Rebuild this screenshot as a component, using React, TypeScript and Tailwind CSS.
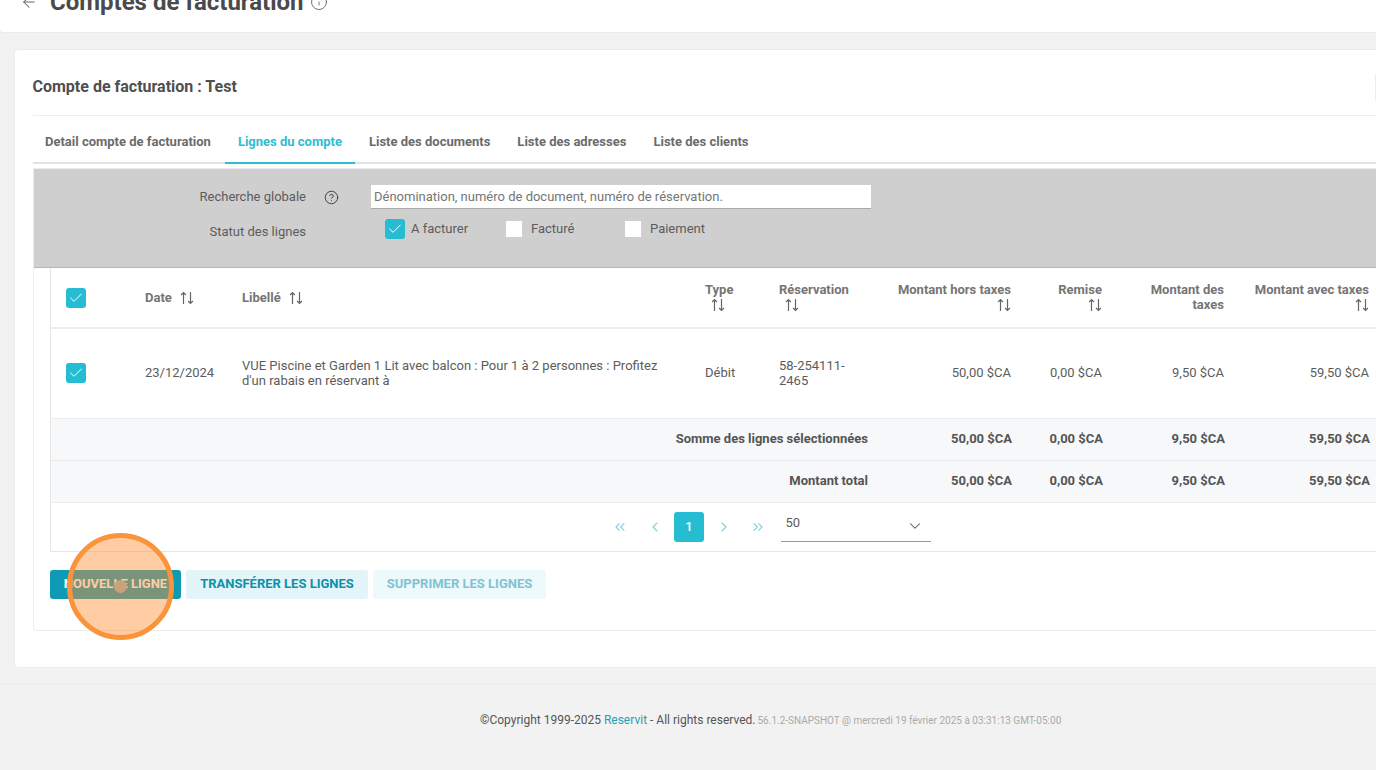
import React from 'react';
import { ArrowLeft, Check, ChevronDown, ChevronLeft, ChevronRight, ChevronsLeft, ChevronsRight, CircleHelp, Info } from 'lucide-react';

const tableCols = 'grid grid-cols-[94px_97px_463px_74px_100px_132px_91px_122px_145px_40px]';
const totalCols = 'grid grid-cols-[828px_133px_91px_122px_145px_40px]';

const SortIcon = ({ className = '' }: { className?: string }) => (
  <svg viewBox="0 0 14 14" className={`w-[14px] h-[14px] ${className}`} fill="none" stroke="#666" strokeWidth="1.2">
    <path d="M3.5 13V1.5M1.1 4L3.5 1.5L5.9 4" />
    <path d="M10.5 1v11.5M8.1 10L10.5 12.5L12.9 10" />
  </svg>
);

const TealCheck = () => (
  <span className="w-[20px] h-[20px] rounded-[3px] bg-[#26bcd2] flex items-center justify-center">
    <Check size={16} color="#fff" strokeWidth={1.5} />
  </span>
);

const Tab = ({ label, active }: { label: string; active?: boolean }) => (
  <div
    className={`px-[13px] h-[48px] pt-[6px] flex items-center text-[13px] font-bold border-b-2 ${
      active ? 'text-[#2ebdd1] border-[#2ebdd1]' : 'text-[#6b6b6b] border-transparent'
    }`}
  >
    {label}
  </div>
);

const TotalRow = ({ label, className }: { label: string; className: string }) => (
  <div className={`${totalCols} items-center bg-[#f6f8fa] pb-[2px] text-[13px] font-bold text-[#555] text-right ${className}`}>
    <div className="pr-[11px]">{label}</div>
    <div>50,00 $CA</div>
    <div>0,00 $CA</div>
    <div>9,50 $CA</div>
    <div>59,50 $CA</div>
  </div>
);

export default function App() {
  return (
    <div className="relative w-[1376px] h-[770px] overflow-hidden bg-[#f2f2f2] font-['Roboto',sans-serif]">
      {/* page is scrolled, so title is cut off at the top */}
      <div className="h-[32px] bg-white rounded-bl-[4px] overflow-hidden shadow-[0_1px_0_#ececec]">
        <div className="flex items-center h-[28px] -mt-[12px] pl-[20px]">
          <ArrowLeft size={18} color="#666" strokeWidth={1.4} />
          <h1 className="ml-[12px] text-[24px] font-bold text-[#4a4a4a] whitespace-nowrap">Comptes de facturation</h1>
          <Info size={18} color="#666" strokeWidth={1.2} className="ml-[6px]" />
        </div>
      </div>

      <div className="ml-[14px] mt-[17px] h-[619px] bg-white rounded-l-[4px] border border-r-0 border-[#ececec] pl-[18px]">
        <div className="flex items-center justify-between h-[66px] pt-[9px] border-b border-[#ececec]">
          <h2 className="-ml-[0.5px] text-[16px] font-bold text-[#4f4f4f]">Compte de facturation : Test</h2>
          <div className="w-px h-[26px] bg-[#dff2f5]" />
        </div>

        <div className="border-b-2 border-[#e2e2e2] h-[48px]">
          <div className="flex gap-px -ml-px">
            <Tab label="Detail compte de facturation" />
            <Tab label="Lignes du compte" active />
            <Tab label="Liste des documents" />
            <Tab label="Liste des adresses" />
            <Tab label="Liste des clients" />
          </div>
        </div>

        <div className="mt-[4px] h-[463px] border border-r-0 border-[#ececec] rounded-bl-[4px]">
          {/* filters */}
          <div className="h-[99px] bg-[#cfcfcf] pt-[16px] border-b border-[#b5b5b5] text-[13px] text-[#5c5c5c]">
            <div className="flex items-center h-[24px]">
              <div className="w-[272px] text-right">Recherche globale</div>
              <CircleHelp size={15} color="#444" strokeWidth={1.6} className="ml-[18px]" />
              <div className="ml-[32px] w-[500px] h-[24px] bg-white border-b border-[#aaa] flex items-center pl-[3px] text-[13px] text-[#757575]">
                Dénomination, numéro de document, numéro de réservation.
              </div>
            </div>
            <div className="flex mt-[10px]">
              <div className="w-[272px] text-right pt-[3px]">Statut des lignes</div>
              <div className="ml-[79px] flex items-center h-[20px]">
                <TealCheck />
                <span className="ml-[6px] w-[95px]">A facturer</span>
                <span className="w-[16px] h-[16px] bg-white" />
                <span className="ml-[9px] w-[94px]">Facturé</span>
                <span className="w-[16px] h-[16px] bg-white" />
                <span className="ml-[9px]">Paiement</span>
              </div>
            </div>
          </div>

          {/* table */}
          <div className="ml-[16px] h-[284px] border border-r-0 border-[#e6e6e6] border-t-0">
            <div className={`${tableCols} h-[61px] items-center border-b-2 border-[#ececec] text-[13px] font-bold text-[#757575]`}>
              <div className="pl-[15px]"><TealCheck /></div>
              <div className="flex items-center gap-[8px]">Date <SortIcon /></div>
              <div className="flex items-center gap-[8px]">Libellé <SortIcon /></div>
              <div className="leading-[15px] pb-px">Type<SortIcon className="ml-[6px] mt-px" /></div>
              <div className="leading-[15px] pb-px">Réservation<SortIcon className="ml-[6px] mt-px" /></div>
              <div className="text-right leading-[15px] pb-px">Montant hors taxes<SortIcon className="ml-auto mt-px" /></div>
              <div className="text-right leading-[15px] pb-px">Remise<SortIcon className="ml-auto mt-px" /></div>
              <div className="text-right leading-[15px] pb-[2px]">Montant des<br />taxes</div>
              <div className="text-right leading-[15px] pb-px">Montant avec taxes<SortIcon className="ml-auto mt-px" /></div>
            </div>
            <div className={`${tableCols} h-[90px] pb-[2px] items-center border-b border-[#ececec] text-[13px] leading-[15px] text-[#5c5c5c]`}>
              <div className="pl-[15px]"><TealCheck /></div>
              <div>23/12/2024</div>
              <div className="pr-[40px]">VUE Piscine et Garden 1 Lit avec balcon : Pour 1 à 2 personnes : Profitez d'un rabais en réservant à</div>
              <div>Débit</div>
              <div>58-254111-<br />2465</div>
              <div className="text-right">50,00 $CA</div>
              <div className="text-right">0,00 $CA</div>
              <div className="text-right">9,50 $CA</div>
              <div className="text-right">59,50 $CA</div>
            </div>
            <TotalRow label="Somme des lignes sélectionnées" className="h-[42px] border-b border-[#e8e8e8]" />
            <TotalRow label="Montant total" className="h-[41px]" />
            <div className="flex items-center h-[49px] border-t border-[#ececec] pl-[554px] gap-[4.5px] text-[#7fd0df]">
              <span className="w-[30px] flex justify-center"><ChevronsLeft size={16} strokeWidth={1.6} /></span>
              <span className="w-[30px] flex justify-center"><ChevronLeft size={16} strokeWidth={1.6} /></span>
              <span className="w-[30px] h-[30px] rounded-[3px] bg-[#26bcd2] text-white text-[13px] font-medium flex items-center justify-center">1</span>
              <span className="w-[30px] flex justify-center"><ChevronRight size={16} strokeWidth={1.6} /></span>
              <span className="w-[30px] flex justify-center"><ChevronsRight size={16} strokeWidth={1.6} /></span>
              <div className="ml-[3px] w-[150px] h-[30px] border-b border-[#999] flex justify-between pl-[5px] pr-[7px] text-[13px] text-[#5c5c5c]">
                <span className="pt-px">50</span>
                <ChevronDown size={18} color="#555" strokeWidth={1.4} className="mt-[5px]" />
              </div>
            </div>
          </div>

          {/* actions */}
          <div className="flex gap-[5px] mt-[18px] ml-[16px] text-[13px] font-bold">
            <button className="w-[131px] h-[29px] pb-[2px] rounded-[3px] bg-[#0e9ab5] text-white">NOUVELLE LIGNE</button>
            <button className="w-[182px] h-[29px] pb-[2px] rounded-[3px] bg-[#e3f5f9] text-[#0f8fa8]">TRANSFÉRER LES LIGNES</button>
            <button className="w-[173px] h-[29px] pb-[2px] rounded-[3px] bg-[#eef9fb] text-[#7fc3d5]">SUPPRIMER LES LIGNES</button>
          </div>
        </div>
      </div>

      <div className="mt-[16px] h-[87px] border-t border-[#ececec] pl-[480px] pt-[26px] flex items-baseline text-[12px] text-[#555]">
        <span>©Copyright 1999-2025 <span className="text-[#1f9fb5]">Reservit</span> - All rights reserved.</span>
        <span className="ml-[2px] text-[10px] text-[#aaa]">56.1.2-SNAPSHOT @ mercredi 19 février 2025 à 03:31:13 GMT-05:00</span>
      </div>

      {/* click marker from the tutorial capture */}
      <div className="absolute left-[67px] top-[533px] w-[107px] h-[107px] rounded-full border-[5px] border-[#f9943b] bg-[#ff8f33]/45 flex items-center justify-center">
        <span className="w-[13px] h-[13px] rounded-full bg-[#c9a27c]" />
      </div>
    </div>
  );
}
